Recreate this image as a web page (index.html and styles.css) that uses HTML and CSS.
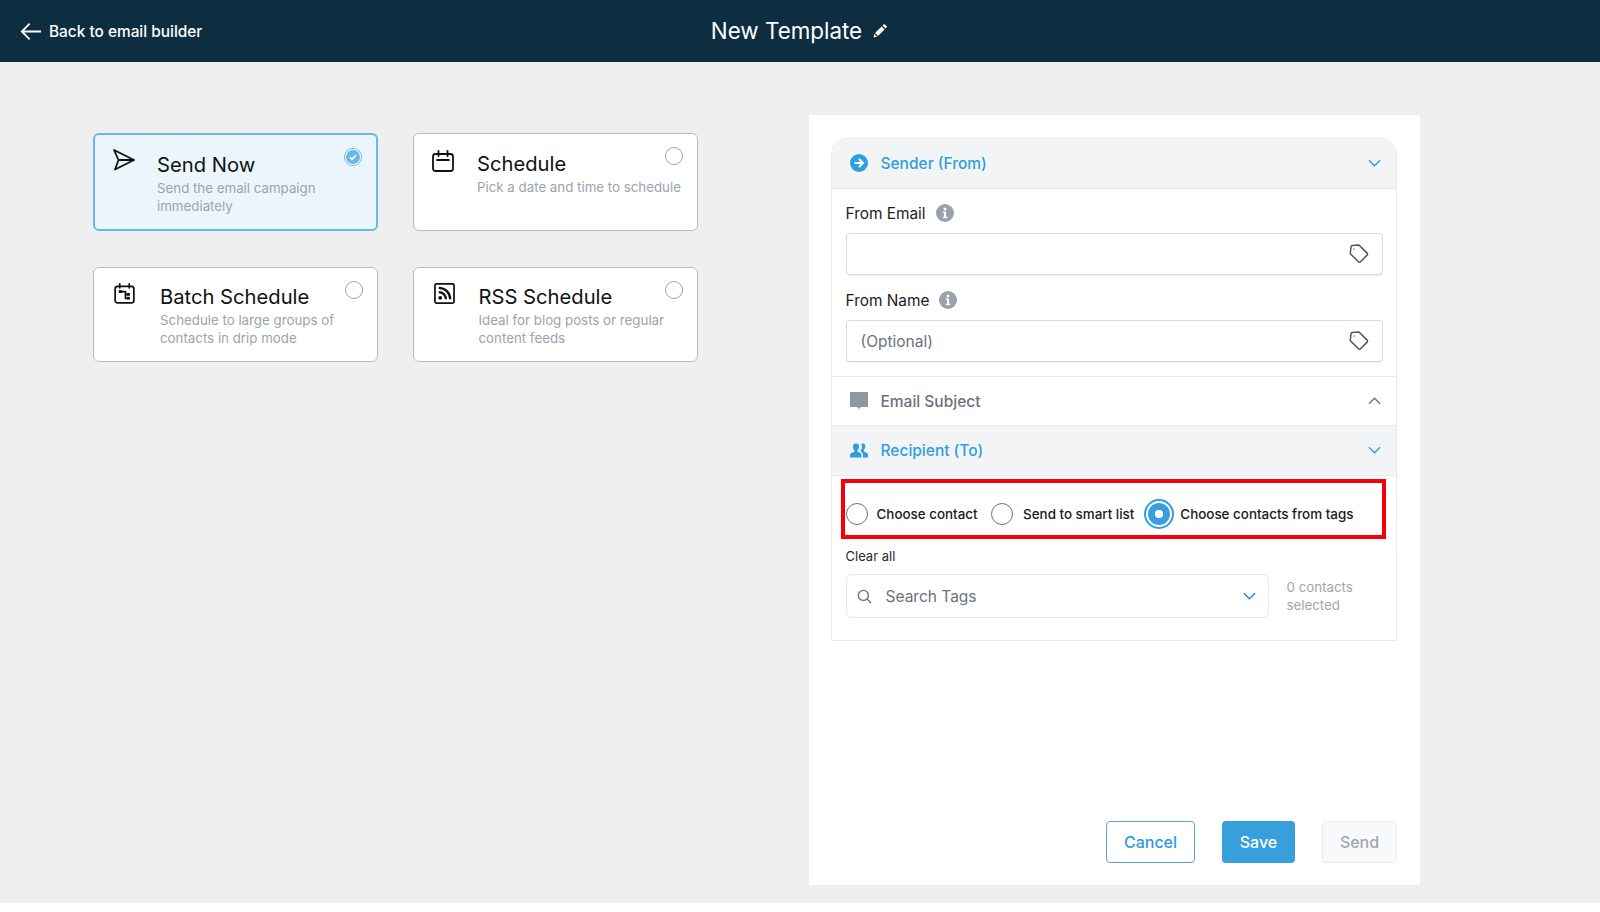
FILE: index.html
```html
<!DOCTYPE html>
<html lang="en">
<head>
<meta charset="utf-8">
<title>New Template</title>
<link rel="stylesheet" href="styles.css">
</head>
<body>
<div class="page">
  <header class="topbar">
    <a class="back">
      <svg class="back-icon" viewBox="0 0 24 20"><path d="M23 10H2M10.5 1.5 2 10l8.5 8.5"/></svg>
      <span>Back to email builder</span>
    </a>
    <div class="title-wrap">
      <span class="title">New Template</span>
      <svg class="pencil" viewBox="0 0 14 14"><path d="M0.5 13.5l.8-3.6 2.8 2.8zM2 9l6.6-6.6 3 3L5 12zM9.5 1.5l1-1a1 1 0 0 1 1.4 0l1.6 1.6a1 1 0 0 1 0 1.4l-1 1z"/></svg>
    </div>
  </header>

  <main class="main">
    <section class="options">
      <div class="card card-active card-sendnow">
        <svg class="card-icon" viewBox="0 0 22 22"><path d="M1 1l20 10L2 20.5 5.500 11zM5.500 11H21"/></svg>
        <div class="card-body">
          <h3 class="card-title">Send Now</h3>
          <p class="card-desc">Send the email campaign immediately</p>
        </div>
        <span class="check-radio"><svg viewBox="0 0 13 13"><circle cx="6.5" cy="6.5" r="6.5"/><path d="M3.6 6.7l2 2 3.8-4"/></svg></span>
      </div>
      <div class="card card-schedule">
        <svg class="card-icon" viewBox="0 0 22 22"><rect x="1" y="4" width="20" height="17" rx="2.5"/><path d="M6.5 1v5M15.5 1v5M5 10h12"/></svg>
        <div class="card-body">
          <h3 class="card-title">Schedule</h3>
          <p class="card-desc">Pick a date and time to schedule</p>
        </div>
        <span class="radio-small"></span>
      </div>
      <div class="card card-batch">
        <svg class="card-icon" viewBox="0 0 22 22"><rect x="1.2" y="3.5" width="19.6" height="17.3" rx="2.5"/><path d="M6 1v4M16 1v4M7 9h5v7h3M12 12h3"/><rect class="solid" x="5" y="7.5" width="3.5" height="3"/><rect class="solid" x="13.5" y="10.5" width="3.2" height="2.8"/><rect class="solid" x="13.5" y="14.5" width="3.2" height="2.8"/></svg>
        <div class="card-body">
          <h3 class="card-title">Batch Schedule</h3>
          <p class="card-desc">Schedule to large groups of contacts in drip mode</p>
        </div>
        <span class="radio-small"></span>
      </div>
      <div class="card card-rss">
        <svg class="card-icon" viewBox="0 0 22 22"><rect x="1" y="1" width="20" height="20" rx="1.5"/><circle class="solid" cx="6.5" cy="15.5" r="2"/><path class="thick" d="M5 9.500a7.500 7.500 0 0 1 7.500 7.500M5 5a12 12 0 0 1 12 12"/></svg>
        <div class="card-body">
          <h3 class="card-title">RSS Schedule</h3>
          <p class="card-desc">Ideal for blog posts or regular content feeds</p>
        </div>
        <span class="radio-small"></span>
      </div>
    </section>

    <section class="panel">
      <div class="accordion">
        <div class="acc-head acc-first acc-blue">
          <svg class="acc-icon" viewBox="0 0 18 18"><circle class="fill-blue" cx="9" cy="9" r="9"/><path class="arrow-white" d="M4.5 9h8M9 5l4 4-4 4"/></svg>
          <span class="acc-label">Sender (From)</span>
          <svg class="chev" viewBox="0 0 14 8"><path d="M1 1l6 6 6-6"/></svg>
        </div>
        <div class="acc-body">
          <label class="field-label">From Email
            <svg class="info" viewBox="0 0 18 18"><circle cx="9" cy="9" r="9"/><circle class="info-w" cx="9" cy="5" r="1.5"/><path class="info-w" d="M6.8 7.6h3.3v5.2h1.2v1.5H6.9v-1.5h1.2V9.1H6.8z"/></svg>
          </label>
          <div class="input">
            <span class="input-text"></span>
            <svg class="tag" viewBox="0 0 20 20"><path d="M2 3.200A1.500 1.500 0 0 1 3.300 1.600l6-.5c.5 0 .9.1 1.200.4l7.600 7.600c.6.6.6 1.500 0 2l-6.600 6.700c-.6.6-1.500.6-2 0L1.800 10.300a1.800 1.800 0 0 1-.5-1.300z"/><circle class="tag-dot" cx="5" cy="5" r=".7"/></svg>
          </div>
          <label class="field-label field-label-2">From Name
            <svg class="info" viewBox="0 0 18 18"><circle cx="9" cy="9" r="9"/><circle class="info-w" cx="9" cy="5" r="1.5"/><path class="info-w" d="M6.8 7.6h3.3v5.2h1.2v1.5H6.900v-1.500h1.200V9.100H6.800z"/></svg>
          </label>
          <div class="input">
            <span class="input-text">(Optional)</span>
            <svg class="tag" viewBox="0 0 20 20"><path d="M2 3.200A1.500 1.500 0 0 1 3.300 1.600l6-.5c.5 0 .9.1 1.200.4l7.600 7.600c.6.6.6 1.500 0 2l-6.600 6.700c-.6.6-1.500.6-2 0L1.800 10.300a1.800 1.800 0 0 1-.5-1.300z"/><circle class="tag-dot" cx="5" cy="5" r=".7"/></svg>
          </div>
        </div>
        <div class="acc-head acc-plain">
          <svg class="acc-icon" viewBox="0 0 18 18"><path class="fill-gray" d="M0 0h18v15h-7l-2 2-2-2H0z"/></svg>
          <span class="acc-label">Email Subject</span>
          <svg class="chev chev-gray" viewBox="0 0 14 8"><path d="M1 7l6-6 6 6"/></svg>
        </div>
        <div class="acc-head acc-blue acc-recipient">
          <svg class="acc-icon" viewBox="0 0 18 15"><path class="fill-blue" d="M6 1a3 3 0 0 1 3 3.200c0 1.500-.7 3-1.500 3.800v1.300c1.800.7 4 1.500 4 3.200V15H0v-2.500c0-1.700 2.700-2.500 4.500-3.200V8C3.700 7.200 3 5.700 3 4.200A3 3 0 0 1 6 1zM12.500 1a2.700 2.700 0 0 1 2.700 3c0 1.400-.6 2.800-1.300 3.500v1.400c1.600.6 4.100 1.400 4.100 3.100V15h-5v-2.800c0-1.500-1.300-2.500-2.500-3.200.1-.4.200-.9.200-1.300.8-.8 1.300-2.200 1.300-3.500 0-1-.3-2-.9-2.700.4-.3.900-.5 1.400-.5z"/></svg>
          <span class="acc-label">Recipient (To)</span>
          <svg class="chev" viewBox="0 0 14 8"><path d="M1 1l6 6 6-6"/></svg>
        </div>
        <div class="acc-body acc-body-rec">
          <div class="radio-row">
            <label class="radio-item radio-item-1"><span class="radio"></span>Choose contact</label>
            <label class="radio-item radio-item-2"><span class="radio radio-wide"></span>Send to smart list</label>
            <label class="radio-item radio-item-3"><span class="radio-on"></span>Choose contacts from tags</label>
          </div>
          <div class="clear-all">Clear all</div>
          <div class="search-row">
            <div class="search">
              <svg class="search-icon" viewBox="0 0 16 16"><circle cx="6.800" cy="6.800" r="5.300"/><path d="M10.800 10.800L15 15"/></svg>
              <span class="search-text">Search Tags</span>
              <svg class="chev chev-strong" viewBox="0 0 14 8"><path d="M1 1l6 6 6-6"/></svg>
            </div>
            <div class="count">0 contacts selected</div>
          </div>
        </div>
      </div>
      <div class="actions">
        <button class="btn btn-cancel">Cancel</button>
        <button class="btn btn-save">Save</button>
        <button class="btn btn-send">Send</button>
      </div>
    </section>
  </main>
</div>
</body>
</html>
```
FILE: styles.css
```css
* { box-sizing: border-box; }
html, body { margin: 0; padding: 0; background: #fff; }
body { font-family: Inter, "Liberation Sans", sans-serif; color: #111; }
.page { height: 903px; background: #efefef; display: flex; flex-direction: column; overflow: hidden; }

.topbar { height: 62px; flex: none; background: #0d2d40; color: #fff; position: relative; display: flex; align-items: center; justify-content: center; }
.back { position: absolute; left: 20px; top: 0; height: 62px; display: flex; align-items: center; font-size: 15.4px; font-weight: 500; gap: 7px; }
.back-icon { width: 22px; height: 19px; fill: none; stroke: #fff; stroke-width: 2; }
.title-wrap { display: flex; align-items: center; gap: 11px; margin-left: -2px; }
.title { font-size: 22.4px; font-weight: 400; line-height: 28px; }
.pencil { width: 14px; height: 14px; fill: #fff; }

.main { flex: 1; display: flex; padding-top: 53px; min-height: 0; }
.options { width: 809px; flex: none; padding: 18px 0 0 92.5px; display: grid; grid-template-columns: 285px 285px; grid-template-rows: 98px 95px; column-gap: 35px; row-gap: 36px; align-content: start; }

.card { background: #fff; border: 1.5px solid #b4bac6; border-radius: 6px; display: flex; align-items: flex-start; position: relative; }
.card-active { background: #eaf6fc; border: 2px solid #67b9e8; height: 97.5px; }
.card-icon { width: 22px; height: 22px; flex: none; fill: none; stroke: #111; stroke-width: 1.8; stroke-linejoin: round; stroke-linecap: round; }
.card-icon .solid { fill: #111; stroke: none; }
.card-icon .thick { stroke-width: 2.400; stroke-linecap: butt; }
.card-body { flex: 1; min-width: 0; }
.card-title { margin: 0; font-size: 20.2px; line-height: 24px; font-weight: 400; color: #111; }
.card-desc { margin: 2px 0 0; font-size: 13.3px; line-height: 18px; color: #9ba3b2; font-weight: 400; }

.card-sendnow { padding: 14px 14px 0 18px; }
.card-sendnow .card-icon { margin-right: 22.500px; }
.card-sendnow .card-body { padding-top: 4px; }
.card-schedule { padding: 16px 14px 0 18px; }
.card-schedule .card-icon { margin-right: 23.500px; }
.card-schedule .card-body { padding-top: 2px; white-space: nowrap; }
.card-schedule .card-desc { margin-right: -40px; }
.card-batch { padding: 15px 14px 0 20px; }
.card-batch .card-icon { margin-right: 25.500px; width: 21px; height: 21px; }
.card-batch .card-body { padding-top: 2px; }
.card-batch .card-desc, .card-rss .card-desc { width: 190px; }
.card-rss { padding: 15px 14px 0 20px; }
.card-rss .card-icon { margin-right: 24px; width: 21px; height: 21px; }
.card-rss .card-body { padding-top: 2px; }

.radio-small { width: 18px; height: 18px; flex: none; border: 1.500px solid #9aa3b5; border-radius: 50%; background: #fff; }
.card-schedule .radio-small { margin-top: -3px; }
.card-batch .radio-small, .card-rss .radio-small { margin-top: -2px; }
.check-radio { width: 18px; height: 18px; flex: none; border: 1.500px solid #67b9e8; border-radius: 50%; padding: 1px; background: #fff; display: block; margin-top: -1px; }
.check-radio svg { display: block; width: 100%; height: 100%; }
.check-radio circle { fill: #67b9e8; }
.check-radio path { fill: none; stroke: #fff; stroke-width: 1.500; }

.panel { width: 611px; flex: none; height: 770px; background: #fff; padding: 23px 23px 22px 22px; display: flex; flex-direction: column; }
.accordion { border: 1px solid #e6e8ec; border-radius: 16px 16px 0 0; }
.acc-head { height: 50px; display: flex; align-items: center; padding: 0 15px 0 17.5px; font-size: 15.5px; font-weight: 500; }
.acc-first { border-radius: 15px 15px 0 0; height: 50px; }
.acc-blue { background: #f2f4f6; color: #2f9fe0; border-bottom: 1px solid #e6e8ec; padding-bottom: 1px; }
.acc-plain { color: #6b7280; border-top: 1px solid #e6e8ec; border-bottom: 1px solid #e6e8ec; }
.acc-recipient { border-bottom: 1px solid #e6e8ec; }
.acc-icon { width: 18px; height: 18px; flex: none; margin-right: 13px; }
.acc-label { flex: 1; }
.fill-blue { fill: #2f9fe0; }
.fill-gray { fill: #8f97a6; }
.arrow-white { fill: none; stroke: #fff; stroke-width: 2; }
.chev { width: 13px; height: 8px; flex: none; fill: none; stroke: #2f9fe0; stroke-width: 1.500; }
.chev-gray { stroke: #6b7280; }
.chev-strong { stroke: #2d7fe0; }

.acc-body { padding: 15px 13.5px 14px; }
.field-label { display: flex; align-items: center; gap: 10px; height: 18px; font-size: 15.4px; color: #222; margin-bottom: 11px; }
.field-label-2 { margin-top: 16px; margin-bottom: 11px; }
.info { width: 18px; height: 18px; fill: #9aa1ae; }
.info .info-w { fill: #fff; }
.input { height: 42px; border: 1.500px solid #d5d9e0; border-radius: 4px; box-shadow: 0 1px 1px rgba(0,0,0,.06); display: flex; align-items: center; justify-content: space-between; padding: 0 13px 0 14px; background: #fff; }
.input-text { font-size: 15.5px; color: #6b7280; }
.tag { width: 20px; height: 20px; fill: none; stroke: #4b5563; stroke-width: 1.500; }
.tag .tag-dot { fill: #4b5563; stroke: none; }

.acc-body-rec { padding: 3px 13.5px 22px; }
.radio-row { margin: 0 -3.500px 0 -4.500px; height: 60px; border: 4px solid #f5000a; display: flex; align-items: center; font-size: 13.4px; font-weight: 500; color: #1a1a1a; padding: 9px 0 0 0.5px; }
.radio-item { display: flex; align-items: center; white-space: nowrap; }
.radio { width: 22px; height: 22px; flex: none; border: 1.500px solid #6b7280; border-radius: 50%; background: #fff; margin-right: 9px; }
.radio-wide { margin-right: 10px; }
.radio-item-1 { margin-right: 13.500px; }
.radio-item-2 { margin-right: 10px; }
.radio-on { width: 30px; height: 30px; flex: none; border: 2px solid #2f9fe0; border-radius: 50%; background: #fff; padding: 2px; margin-right: 6px; display: flex; align-items: center; justify-content: center; }
.radio-on::before { content: ""; width: 22px; height: 22px; border-radius: 50%; background: radial-gradient(circle, #fff 0 4px, #37a0dc 4.500px); }
.clear-all { font-size: 13px; line-height: 16px; color: #2b2b2b; margin-top: 9px; }
.search-row { display: flex; align-items: center; margin-top: 10px; }
.search { width: 423px; height: 44px; flex: none; border: 1.500px solid #e6e8ec; border-radius: 6px; display: flex; align-items: center; padding: 0 12px 0 10px; }
.search-icon { width: 15px; height: 15px; flex: none; fill: none; stroke: #6b7280; stroke-width: 1.500; margin-right: 14px; }
.search-text { flex: 1; font-size: 15.5px; color: #6b7280; }
.count { margin-left: 18px; width: 90px; font-size: 13.3px; line-height: 18px; color: #a0a6b4; }

.actions { margin-top: auto; display: flex; justify-content: flex-end; gap: 27px; }
.btn { height: 42px; border-radius: 4px; font-family: inherit; font-size: 16px; font-weight: 500; padding: 0; }
.btn-cancel { width: 89px; background: #fff; border: 1.500px solid #5aa3d8; color: #2d9be0; }
.btn-save { width: 73px; background: #379fdc; border: none; color: #fff; }
.btn-send { width: 75px; background: #f8f9fb; border: 1.500px solid #e8eaef; color: #a0a6b4; }
```
